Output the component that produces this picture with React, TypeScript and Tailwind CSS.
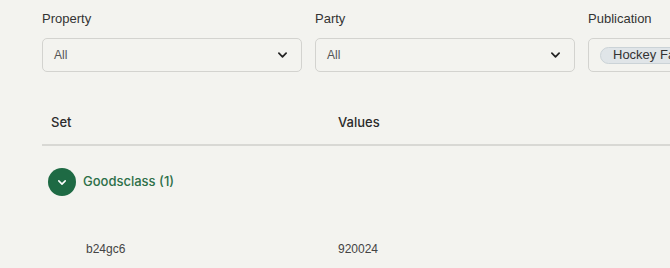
import React from "react";

const filters = [
  { label: "Property", value: "All" },
  { label: "Party", value: "All" },
  { label: "Publication", chip: "Hockey Fans" },
];

function Chevron({ className }: { className?: string }) {
  return (
    <svg className={className} viewBox="0 0 10 6" fill="none" stroke="currentColor" strokeWidth="1.9" strokeLinecap="round" strokeLinejoin="round">
      <polyline points="1,1 5,5 9,1" />
    </svg>
  );
}

export default function App() {
  return (
    <div className="w-[670px] h-[268px] overflow-hidden bg-[#f3f3ef] font-['Liberation_Sans',Arial,sans-serif] text-[#2b2b2b]">
      <div className="pl-[42px] pt-[11px]">
        <div className="flex gap-[13px]">
          {filters.map((f) => (
            <div key={f.label} className="w-[260px] shrink-0">
              <div className="text-[13px] leading-[16px] text-[#333] mb-[11px]">{f.label}</div>
              <div className="h-[34px] border border-[#d3d3cf] rounded-[5px] bg-[#f3f3ef] flex items-center px-[11px]">
                {f.chip ? (
                  <span className="h-[17px] flex items-center rounded-full border border-[#cbd3d7] bg-[#e0e5e8] pl-[12px] pr-[10px] text-[13px] text-[#333]">
                    {f.chip}
                  </span>
                ) : (
                  <>
                    <span className="text-[12px] text-[#555] flex-1">{f.value}</span>
                    <Chevron className="w-[9px] h-[6px] mr-[3px] text-[#222]" />
                  </>
                )}
              </div>
            </div>
          ))}
        </div>

        <div className="mt-[30px]">
          <div className="flex h-[44px] items-center border-b-2 border-[#d8d8d4] text-[13px] font-['Inter',sans-serif] font-medium text-[#2b2b2b]">
            <div className="w-[287px] pl-[9px]">Set</div>
            <div className="pl-[9px]">Values</div>
          </div>
          <div className="flex h-[72px] items-center pl-[6px]">
            <div className="w-[28px] h-[28px] rounded-full bg-[#1e6a44] flex items-center justify-center">
              <Chevron className="w-[8px] h-[5px] text-white" />
            </div>
            <span className="ml-[7px] text-[13px] font-['Inter',sans-serif] font-medium text-[#2c6f48]">Goodsclass (1)</span>
          </div>
          <div className="flex h-[62px] items-center text-[12px] text-[#444]">
            <div className="w-[287px] pl-[44px]">b24gc6</div>
            <div className="pl-[9px]">920024</div>
          </div>
        </div>
      </div>
    </div>
  );
}
